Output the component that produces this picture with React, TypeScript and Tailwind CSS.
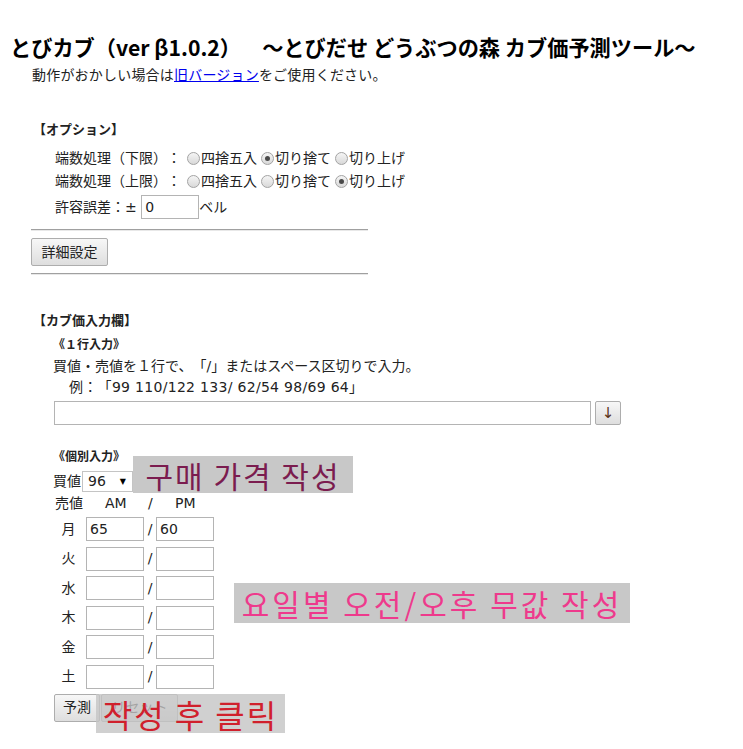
const font = "font-['DejaVu_Sans','Noto_Sans_CJK_JP',sans-serif] [text-spacing-trim:space-all]";

function Radio({ checked }: { checked?: boolean }) {
  return (
    <span className="relative inline-block w-[13px] h-[13px] shrink-0 rounded-full border border-[#a3a3a3] bg-linear-to-b from-[#f5f5f5] to-[#d9d9d9]">
      {checked && <span className="absolute inset-[3px] rounded-full bg-[#4a4a4a]" />}
    </span>
  );
}

function Choice({ label, checked }: { label: string; checked?: boolean }) {
  return (
    <span className="flex items-center gap-[1px] mr-[4px]">
      <Radio checked={checked} />
      <span>{label}</span>
    </span>
  );
}

function Box({ value, w = 'w-[58px]' }: { value?: string; w?: string }) {
  return (
    <div className={`${w} h-[24px] border border-[#b4b4b4] bg-white px-[3px] leading-[22px] text-[14px] text-[#222]`}>
      {value}
    </div>
  );
}

const btn =
  'h-[28px] border border-[#adadad] rounded-[2px] bg-linear-to-b from-[#f7f7f7] to-[#dedede] text-[14px] text-[#222] flex items-center justify-center';

const days: [string, string, string][] = [
  ['月', '65', '60'],
  ['火', '', ''],
  ['水', '', ''],
  ['木', '', ''],
  ['金', '', ''],
  ['土', '', ''],
];

export default function App() {
  return (
    <div className={`relative w-[743px] h-[749px] overflow-hidden bg-white text-[#222] ${font}`}>
      <h1 className="pt-[33px] pl-[10px] h-[61px] leading-[28px] text-[21.2px] font-bold text-black whitespace-nowrap font-['Noto_Sans_CJK_JP',sans-serif]">
        とびカブ（ver β1.0.2）　～とびだせ どうぶつの森 カブ価予測ツール～
      </h1>
      <p className="mt-[4px] pl-[32px] h-[20px] leading-[20px] text-[14px] tracking-[0.2px]">
        動作がおかしい場合は<span className="text-[#0000ee] underline">旧バージョン</span>をご使用ください。
      </p>

      <div className="mt-[35px] pl-[33px] h-[20px] leading-[20px] text-[13px] font-bold">【オプション】</div>

      <div className="pl-[55px] text-[14px]">
        <div className="mt-[7px] h-[23px] flex items-center">
          <span className="mr-[6px]">端数処理（下限）：</span>
          <Choice label="四捨五入" />
          <Choice label="切り捨て" checked />
          <Choice label="切り上げ" />
        </div>
        <div className="h-[23px] flex items-center">
          <span className="mr-[6px]">端数処理（上限）：</span>
          <Choice label="四捨五入" />
          <Choice label="切り捨て" />
          <Choice label="切り上げ" checked />
        </div>
        <div className="mt-[2px] h-[24px] flex items-center whitespace-pre">
          <span>許容誤差：± </span>
          <Box value="0" />
          <span>ベル</span>
        </div>
      </div>

      <div className="ml-[31px] mt-[10px] w-[337px] h-[2px] border-t border-[#a0a0a0] border-b border-b-[#e8e8e8]" />
      <div className="ml-[31px] mt-[7px] flex">
        <div className={`${btn} w-[77px]`}>詳細設定</div>
      </div>
      <div className="ml-[31px] mt-[7px] w-[337px] h-[2px] border-t border-[#a0a0a0] border-b border-b-[#e8e8e8]" />

      <div className="mt-[36px] pl-[33px] h-[20px] leading-[20px] text-[13px] font-bold">【カブ価入力欄】</div>

      <div className="pl-[53px]">
        <div className="mt-[5px] h-[18px] leading-[18px] text-[12px] font-bold">《１行入力》</div>
        <div className="mt-[2px] h-[20px] leading-[20px] text-[14px]">
          買値・売値を１行で、「/」またはスペース区切りで入力。
        </div>
        <div className="mt-[1px] pl-[16px] h-[20px] leading-[20px] text-[14px] tracking-[0.3px]">例：「99 110/122 133/ 62/54 98/69 64」</div>
        <div className="mt-[4px] pl-[1px] flex gap-[4px]">
          <Box w="w-[537px]" />
          <div className={`${btn} w-[26px] !h-[24px] text-[15px]`}>
            <span className="text-[#5a3218]">↓</span>
          </div>
        </div>

        <div className="mt-[23px] h-[18px] leading-[18px] text-[12px] font-bold">《個別入力》</div>
        <div className="mt-[5px] h-[21px] flex items-center text-[14px]">
          <span className="w-[29px]">買値</span>
          <div className="w-[51px] h-[21px] border border-[#c4c4c4] bg-white flex items-center justify-between pl-[5px] pr-[6px]">
            <span>96</span>
            <span className="text-[8px] text-black">▼</span>
          </div>
        </div>
        <div className="mt-[2px] h-[18px] flex items-center text-[14px]">
          <span className="ml-[2px] w-[50px]">売値</span>
          <span className="w-[43px]">AM</span>
          <span className="w-[27px]">/</span>
          <span>PM</span>
        </div>

        <div className="mt-[5px] flex flex-col gap-[5.5px] text-[14px]">
          {days.map(([d, am, pm]) => (
            <div key={d} className="h-[24px] flex items-center">
              <span className="ml-[2px] w-[27px] text-center">{d}</span>
              <span className="ml-[4px]">
                <Box value={am} />
              </span>
              <span className="w-[12px] text-center">/</span>
              <Box value={pm} />
            </div>
          ))}
        </div>

        <div className="mt-[5px] pl-[1px] flex gap-[1px]">
          <div className={`${btn} w-[46px]`}>予測</div>
          <div className={`${btn} w-[77px]`}>リセット</div>
        </div>
      </div>

      <div className="absolute left-[133px] top-[456px] w-[220px] h-[37px] bg-[#c8c8c8] flex items-center justify-center text-[30px] leading-none tracking-[2px] text-[#7b1c4f] font-['Noto_Sans_CJK_KR',sans-serif]">
        구매 가격 작성
      </div>
      <div className="absolute left-[234px] top-[583px] w-[396px] h-[40px] bg-[#c8c8c8] flex items-center justify-center text-[30px] leading-none tracking-[3px] text-[#ee3a8c] font-['Noto_Sans_CJK_KR',sans-serif]">
        요일별 오전/오후 무값 작성
      </div>
      <div className="absolute left-[96px] top-[694px] w-[189px] h-[39px] bg-[#c4c4c4]/80 flex items-center justify-center text-[32px] leading-none tracking-[2px] text-[#d0202c] font-['Noto_Sans_CJK_KR',sans-serif]">
        작성 후 클릭
      </div>
    </div>
  );
}
